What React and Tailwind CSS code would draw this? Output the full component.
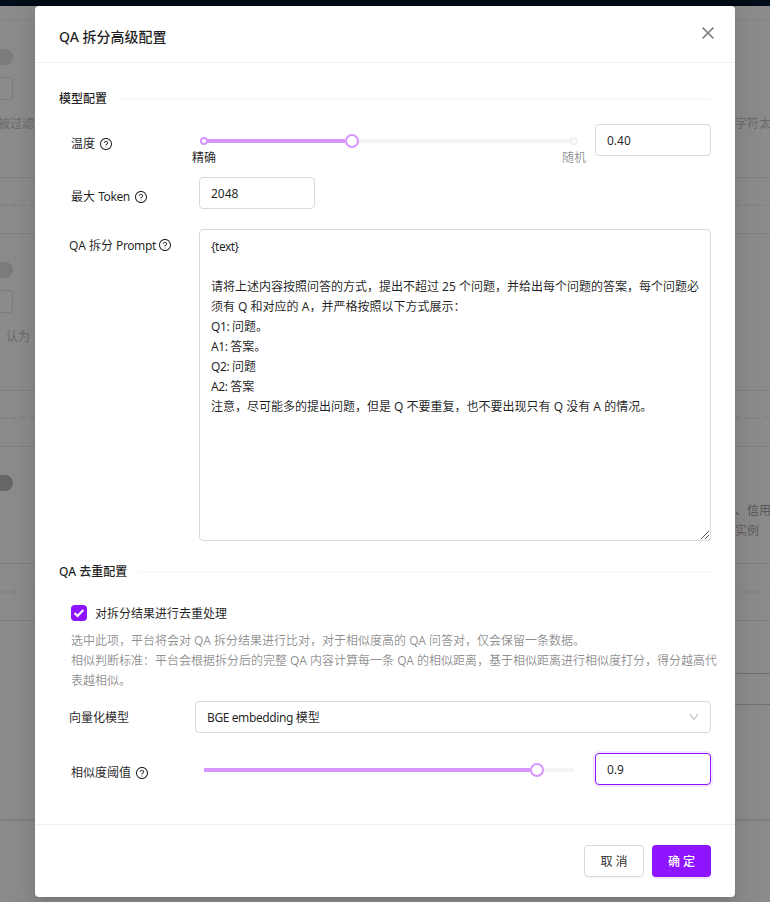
import React from 'react';

function HelpIcon() {
  return (
    <svg width="12" height="12" viewBox="64 64 896 896" fill="currentColor" className="shrink-0">
      <path d="M512 64C264.6 64 64 264.6 64 512s200.6 448 448 448 448-200.6 448-448S759.4 64 512 64zm0 820c-205.4 0-372-166.6-372-372s166.6-372 372-372 372 166.6 372 372-166.6 372-372 372z" />
      <path d="M623.6 316.7C593.6 290.4 554 276 512 276s-81.6 14.5-111.6 40.7C369.2 344 352 380.7 352 420v7.6c0 4.4 3.6 8 8 8h48c4.4 0 8-3.6 8-8V420c0-44.1 43.1-80 96-80s96 35.9 96 80c0 31.1-22 59.6-56.1 72.7-21.2 8.1-39.2 22.3-52.1 40.9-13.1 19-19.9 41.8-19.9 64.9V620c0 4.4 3.6 8 8 8h48c4.4 0 8-3.6 8-8v-22.7a48.3 48.3 0 0 1 30.9-44.8c59-22.7 97.1-74.7 97.1-132.5.1-39.3-17.1-76-48.3-103.3zM472 732a40 40 0 1 0 80 0 40 40 0 1 0-80 0z" />
    </svg>
  );
}

function SectionTitle({ children }) {
  return (
    <div className="flex h-5 items-center px-6 font-medium text-black/88">
      <span className="whitespace-nowrap">{children}</span>
      <span className="ml-3 h-0.5 flex-1 bg-[#f9f9f9]" />
    </div>
  );
}

function Backdrop() {
  return (
    <div className="flex h-full flex-col bg-[#8b8b8b] text-[#6a6a6a]">
      <div className="h-1.5 shrink-0 bg-[#000c17]" />
      <div className="h-[15px] shrink-0 border-b border-[#858585]" />
      <div className="flex h-[157px] shrink-0 justify-between border-b border-[#7f7f7f] pt-7">
        <div>
          <div className="h-4 w-[13px] rounded-r-full bg-[#7b7b7b]" />
          <div className="mt-3 h-[23px] w-[13px] rounded-r border border-l-0 border-[#7c7c7c]" />
          <div className="mt-3.5 -ml-0.5 leading-5 whitespace-nowrap">被过滤</div>
        </div>
        <div className="w-[35px] pt-[65px] leading-5 whitespace-nowrap">字符太</div>
      </div>
      <div className="h-7 shrink-0 border-b-2 border-dashed border-[#838383]" />
      <div className="h-7 shrink-0 border-b border-[#7f7f7f]" />
      <div className="h-[157px] shrink-0 border-b border-[#7f7f7f] pt-7">
        <div className="h-4 w-[13px] rounded-r-full bg-[#7b7b7b]" />
        <div className="mt-3 h-[23px] w-[13px] rounded-r border border-l-0 border-[#7c7c7c]" />
        <div className="mt-3.5 ml-1.5 leading-5">认为</div>
      </div>
      <div className="h-7 shrink-0 border-b-2 border-dashed border-[#838383]" />
      <div className="h-7 shrink-0 border-b border-[#7f7f7f]" />
      <div className="flex h-[117px] shrink-0 justify-between border-b border-[#7f7f7f] pt-7">
        <div className="h-4 w-[13px] rounded-r-full bg-[#666666]" />
        <div className="w-[35px] pt-[26px] leading-5 whitespace-nowrap text-[#555555]">
          <div>、信用</div>
          <div className="text-[#625b58]">实例</div>
        </div>
      </div>
      <div className="h-[29px] shrink-0 border-b-2 border-dashed border-[#838383]" />
      <div className="h-7 shrink-0 border-b border-[#7f7f7f]" />
      <div className="ml-[735px] h-[53px] shrink-0 border-b border-[#6f6f6f]" />
      <div className="ml-[735px] h-[31px] shrink-0 border-b border-[#6f6f6f]" />
      <div className="h-[116px] shrink-0 border-b-2 border-[#7e7e7e]" />
    </div>
  );
}

function Tight({ children }) {
  return <span className="tracking-[-0.4px]">{children}</span>;
}

const promptLines = [
  <span className="tracking-[-0.5px]">{'{text}'}</span>,
  '',
  '请将上述内容按照问答的方式，提出不超过 25 个问题，并给出每个问题的答案，每个问题必',
  '须有 Q 和对应的 A，并严格按照以下方式展示：',
  <><Tight>Q1: </Tight>问题。</>,
  <><Tight>A1: </Tight>答案。</>,
  <><Tight>Q2: </Tight>问题</>,
  <><Tight>A2: </Tight>答案</>,
  '注意，尽可能多的提出问题，但是 Q 不要重复，也不要出现只有 Q 没有 A 的情况。',
];

function Modal() {
  return (
    <div className="flex h-[891px] w-[700px] flex-col rounded bg-white text-black/88 shadow-[0_6px_16px_0_rgba(0,0,0,0.08),0_3px_6px_-4px_rgba(0,0,0,0.12),0_9px_28px_8px_rgba(0,0,0,0.05)]">
      <header className="flex h-[57px] shrink-0 items-center justify-between border-b border-[#f0f0f0] pr-[21px] pl-6">
        <h1 className="pt-1.5 text-sm font-medium">QA 拆分高级配置</h1>
        <svg width="12" height="12" viewBox="0 0 12 12" className="-mt-0.5 text-black/50" fill="none" stroke="currentColor" strokeWidth="1.5">
          <path d="M.6.6l10.8 10.8M11.4.6L.6 11.4" />
        </svg>
      </header>

      <main className="flex flex-1 flex-col">
        <div className="pt-[26px]">
          <SectionTitle>模型配置</SectionTitle>
        </div>

        <div className="mt-[15px] flex h-[53px] pl-9">
          <div className="flex h-5 w-[121px] items-center gap-[5px] pt-[19px]">温度 <HelpIcon /></div>
          <div className="w-[394px]">
            <div className="ml-2 flex h-[34px] w-[378px] items-center">
              <span className="z-10 size-2 shrink-0 rounded-full border-2 border-[#d695ff] bg-white" />
              <span className="-ml-0.5 h-1 w-[139px] bg-[#d695ff]" />
              <span className="z-10 -mr-1 size-3.5 shrink-0 rounded-full border-2 border-[#d695ff] bg-white" />
              <span className="h-1 flex-1 bg-[#f4f4f4]" />
              <span className="-ml-0.5 size-2 shrink-0 rounded-full border-2 border-[#f0f0f0] bg-white" />
            </div>
            <div className="-mt-2 flex justify-between leading-4">
              <span>精确</span>
              <span className="text-black/45">随机</span>
            </div>
          </div>
          <div className="ml-[9px] flex h-8 w-[116px] items-center rounded border border-[#d9d9d9] px-[11px] pt-0.5">0.40</div>
        </div>

        <div className="flex h-8 items-center pl-9">
          <div className="flex w-32 items-center gap-[5px] pt-2"><span>最大 <Tight>Token</Tight></span><HelpIcon /></div>
          <div className="flex h-8 w-[116px] items-center rounded border border-[#d9d9d9] px-[11px] pt-0.5">2048</div>
        </div>

        <div className="mt-5 flex h-[312px] pl-[34px]">
          <div className="flex h-8 w-[130px] items-center gap-[3px]"><span className="pt-0.5">QA 拆分 <Tight>Prompt</Tight></span><HelpIcon /></div>
          <div className="flex w-[512px] flex-col justify-between rounded border border-[#d9d9d9] pt-[7px] pl-[11px]">
            <div className="leading-5 whitespace-nowrap">
              {promptLines.map((line, i) => (
                <div key={i} className="h-5">{line}</div>
              ))}
            </div>
            <svg width="10" height="10" viewBox="0 0 10 10" className="self-end" stroke="#555" strokeWidth="1">
              <path d="M1 9L9 1M5 9L9 5" />
            </svg>
          </div>
        </div>

        <div className="pt-[21px]">
          <SectionTitle>QA 去重配置</SectionTitle>
        </div>

        <div className="mt-[21px] flex h-5 items-center gap-2 pl-9">
          <span className="flex size-4 items-center justify-center rounded bg-[#8f14ff]">
            <svg width="12" height="10" viewBox="0 0 12 10" fill="none" stroke="white" strokeWidth="2">
              <path d="M1.5 5l3 3L10.3 2" />
            </svg>
          </span>
          <span className="pt-0.5">对拆分结果进行去重处理</span>
        </div>
        <div className="mt-2 pl-9 leading-5 whitespace-nowrap text-black/45">
          <div>选中此项，平台将会对 QA 拆分结果进行比对，对于相似度高的 QA 问答对，仅会保留一条数据。</div>
          <div>相似判断标准：平台会根据拆分后的完整 QA 内容计算每一条 QA 的相似距离，基于相似距离进行相似度打分，得分越高代</div>
          <div>表越相似。</div>
        </div>

        <div className="mt-2.5 flex h-8 items-center pl-[34px]">
          <div className="w-[126px] pt-0.5">向量化模型</div>
          <div className="flex h-8 w-[516px] items-center justify-between rounded border border-[#d9d9d9] px-[11px]">
            <span className="pt-0.5"><Tight>BGE embedding </Tight>模型</span>
            <svg width="10" height="8" viewBox="0 0 10 8" fill="none" stroke="#bfbfbf" strokeWidth="1.2">
              <path d="M1 1l4 5.5L9 1" />
            </svg>
          </div>
        </div>

        <div className="mt-5 flex h-8 items-center pl-9">
          <div className="flex w-[133px] items-center gap-[5px] pt-2">相似度阈值 <HelpIcon /></div>
          <div className="flex w-[370px] items-center pt-0.5">
            <span className="h-1 w-[326px] bg-[#d695ff]" />
            <span className="size-3.5 rounded-full border-2 border-[#d695ff] bg-white" />
            <span className="h-1 flex-1 bg-[#f4f4f4]" />
          </div>
          <div className="ml-[21px] flex h-8 w-[116px] items-center rounded border border-[#8f14ff] px-[11px] pt-0.5 shadow-[0_0_0_2px_rgba(143,20,255,0.1)]">0.9</div>
        </div>
      </main>

      <footer className="flex h-[73px] shrink-0 items-start justify-end gap-2 border-t border-[#f0f0f0] pt-5 pr-6">
        <button className="h-8 w-[60px] rounded border border-[#d9d9d9] pt-0.5 shadow-[0_2px_0_rgba(0,0,0,0.02)]">取 消</button>
        <button className="h-8 w-[59px] rounded bg-[#8f14ff] pt-0.5 font-medium text-white shadow-[0_2px_0_rgba(143,20,255,0.1)]">确 定</button>
      </footer>
    </div>
  );
}

export default function App() {
  return (
    <div className="relative h-[902px] w-[770px] overflow-hidden font-['Noto_Sans','Noto_Sans_CJK_SC',sans-serif] text-xs">
      <Backdrop />
      <div className="absolute inset-0 flex justify-center pt-1.5">
        <Modal />
      </div>
    </div>
  );
}
